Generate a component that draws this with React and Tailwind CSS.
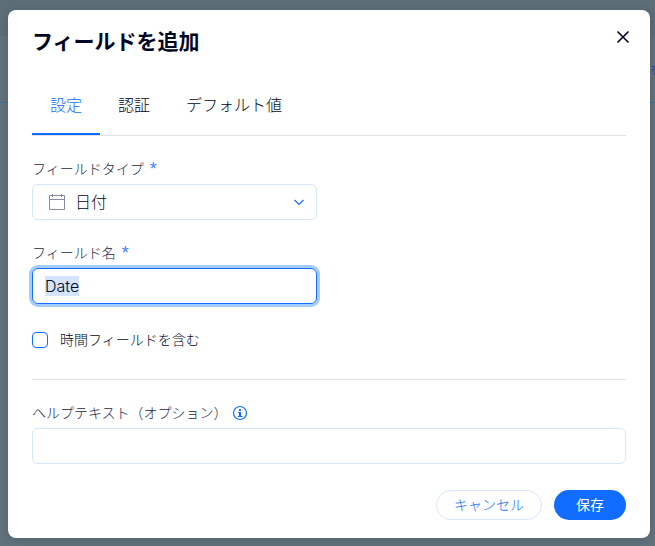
import { useState } from "react";

const TABS = ["設定", "認証", "デフォルト値"];

const Label = ({ htmlFor, required, children }) => (
  <label
    htmlFor={htmlFor}
    className="flex h-8 items-center gap-[6px] pt-px text-sm text-[#24273f]"
  >
    {children}
    {required && (
      <span className="font-['Liberation_Sans',sans-serif] text-lg leading-4 font-normal text-[#3b83ff]">
        *
      </span>
    )}
  </label>
);

const CalendarIcon = () => (
  <svg
    className="pointer-events-none absolute left-4 top-[9px] size-[18px] text-[#868aa5]"
    viewBox="0 0 18 18"
    fill="none"
    stroke="currentColor"
  >
    <path d="M1.5 2.5h15v14h-15zM1.5 6.5h15M4.5 1v3M13.5 1v3" />
  </svg>
);

const InfoIcon = () => (
  <svg className="mt-px size-4 text-[#116dff]" viewBox="0 0 16 16" fill="none">
    <circle cx="8" cy="8" r="6.5" stroke="currentColor" strokeWidth="1.2" />
    <path d="M6 7h3v4h1.5v1H6v-1h1V8H6z" fill="currentColor" />
    <rect x="7" y="4" width="2" height="2" fill="currentColor" />
  </svg>
);

const App = () => {
  const [tab, setTab] = useState(TABS[0]);
  const [name, setName] = useState("Date");
  const [help, setHelp] = useState("");
  const [includeTime, setIncludeTime] = useState(false);

  return (
    <div className="relative min-h-screen overflow-hidden bg-[#61727c] pt-[10px] pr-[5px] pb-2 pl-2 font-['Open_Sans','Noto_Sans_CJK_JP',sans-serif] font-light text-[#000624]">
      <div className="absolute inset-x-0 top-0 h-9 bg-[#5c6d78]" />
      <div className="absolute inset-x-0 top-[102px] h-px bg-[#2f74a8]" />
      <span className="absolute top-[60px] -right-[9px] text-sm font-normal text-[#1f4fa8]">
        を
      </span>

      <div
        role="dialog"
        aria-labelledby="dialog-title"
        className="relative rounded-lg bg-white px-6 pb-[18px] shadow-[0_2px_8px_rgba(0,6,36,0.15)]"
      >
        <header className="flex h-16 items-center justify-between">
          <h2 id="dialog-title" className="text-[21px] font-bold">
            フィールドを追加
          </h2>
          <button type="button" aria-label="閉じる" className="-mr-1 mb-[10px]">
            <svg
              className="size-[14px]"
              viewBox="0 0 14 14"
              fill="none"
              stroke="currentColor"
              strokeWidth="1.6"
            >
              <path d="M1.5 1.5l11 11M12.5 1.5l-11 11" />
            </svg>
          </button>
        </header>

        <nav className="flex h-[62px] border-b border-[#dfe1e6]">
          {TABS.map((t) => (
            <button
              key={t}
              type="button"
              onClick={() => setTab(t)}
              className={
                t === tab
                  ? "border-b-2 border-[#116dff] px-[18px] pt-[2px] text-[#116dff]"
                  : "border-b-2 border-transparent px-[18px] pt-[2px]"
              }
            >
              {t}
            </button>
          ))}
        </nav>

        <div className="mt-4">
          <Label htmlFor="type" required>
            フィールドタイプ
          </Label>
          <div className="relative w-[285px]">
            <CalendarIcon />
            <select
              id="type"
              className="h-9 w-full appearance-none rounded-md border border-[#d6e6fe] bg-white pl-[42px] text-base outline-none"
            >
              <option>日付</option>
            </select>
            <svg
              className="pointer-events-none absolute top-[14px] right-3 h-2 w-3 text-[#116dff]"
              viewBox="0 0 12 8"
              fill="none"
              stroke="currentColor"
              strokeWidth="1.2"
            >
              <path d="M1.5 2L6 6.5 10.5 2" />
            </svg>
          </div>
        </div>

        <div className="mt-4">
          <Label htmlFor="name" required>
            フィールド名
          </Label>
          <input
            id="name"
            type="text"
            autoFocus
            value={name}
            onChange={(e) => setName(e.target.value)}
            onFocus={(e) => e.target.select()}
            className="block h-9 w-[285px] rounded-md border border-[#d6e6fe] px-3 font-['Inter','Noto_Sans_CJK_JP',sans-serif] text-base outline-none selection:bg-[#d4e3fe] selection:text-[#000624] focus:border-[#116dff] focus:ring-3 focus:ring-[#a3cdff]"
          />
        </div>

        <label className="mt-6 flex h-6 items-center gap-3 text-sm">
          <input
            type="checkbox"
            checked={includeTime}
            onChange={(e) => setIncludeTime(e.target.checked)}
            className="size-4 appearance-none rounded border border-[#116dff] checked:bg-[#116dff]"
          />
          時間フィールドを含む
        </label>

        <div className="mt-[27px] border-t border-[#dfe1e6] pt-4">
          <div className="flex items-center gap-1">
            <Label htmlFor="help">ヘルプテキスト（オプション）</Label>
            <InfoIcon />
          </div>
          <input
            id="help"
            type="text"
            value={help}
            onChange={(e) => setHelp(e.target.value)}
            className="block h-9 w-full rounded-md border border-[#d6e6fe] px-3 text-base outline-none"
          />
        </div>

        <footer className="mt-[26px] flex justify-end gap-3 text-sm">
          <button
            type="button"
            className="h-[30px] rounded-full border border-[#d6e6fe] px-[17px] text-[#116dff]"
          >
            キャンセル
          </button>
          <button
            type="button"
            className="h-[30px] rounded-full bg-[#116dff] px-[22px] font-normal text-white"
          >
            保存
          </button>
        </footer>
      </div>
    </div>
  );
};

export default App;
